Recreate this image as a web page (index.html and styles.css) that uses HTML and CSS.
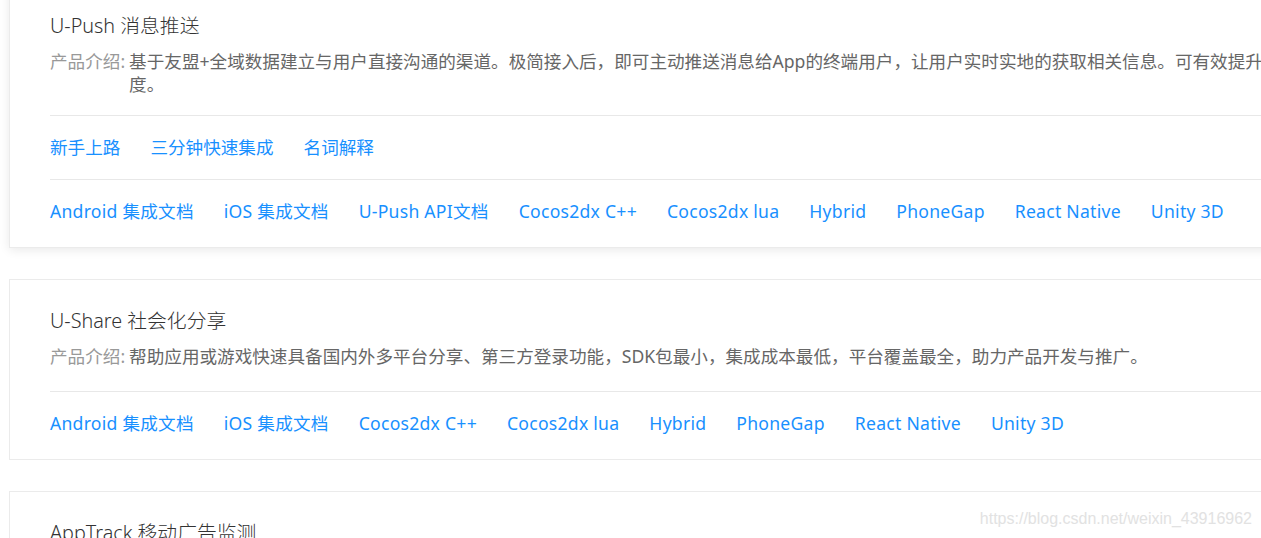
FILE: index.html
```html
<!DOCTYPE html>
<html lang="zh-CN">
<head>
<meta charset="utf-8">
<title>友盟 文档</title>
<link rel="stylesheet" href="styles.css">
</head>
<body>
<main class="page">
  <section class="card card--active">
    <div class="card__head">
      <h2 class="card__title">U-Push 消息推送</h2>
      <div class="card__desc card__desc--wrap">
        <span class="card__label">产品介绍:</span>
        <p class="card__text">基于友盟+全域数据建立与用户直接沟通的渠道。极简接入后，即可主动推送消息给App的终端用户，让用户实时实地的获取相关信息。可有效提升用户粘性，提高App活跃度。</p>
      </div>
    </div>
    <nav class="card__links card__links--guide">
      <a class="card__link" href="#">新手上路</a>
      <a class="card__link" href="#">三分钟快速集成</a>
      <a class="card__link" href="#">名词解释</a>
    </nav>
    <nav class="card__links">
      <a class="card__link" href="#">Android 集成文档</a>
      <a class="card__link" href="#">iOS 集成文档</a>
      <a class="card__link" href="#">U-Push API文档</a>
      <a class="card__link" href="#">Cocos2dx C++</a>
      <a class="card__link" href="#">Cocos2dx lua</a>
      <a class="card__link" href="#">Hybrid</a>
      <a class="card__link" href="#">PhoneGap</a>
      <a class="card__link" href="#">React Native</a>
      <a class="card__link" href="#">Unity 3D</a>
    </nav>
  </section>

  <section class="card">
    <div class="card__head">
      <h2 class="card__title">U-Share 社会化分享</h2>
      <div class="card__desc">
        <span class="card__label">产品介绍:</span>
        <p class="card__text">帮助应用或游戏快速具备国内外多平台分享、第三方登录功能，SDK包最小，集成成本最低，平台覆盖最全，助力产品开发与推广。</p>
      </div>
    </div>
    <nav class="card__links">
      <a class="card__link" href="#">Android 集成文档</a>
      <a class="card__link" href="#">iOS 集成文档</a>
      <a class="card__link" href="#">Cocos2dx C++</a>
      <a class="card__link" href="#">Cocos2dx lua</a>
      <a class="card__link" href="#">Hybrid</a>
      <a class="card__link" href="#">PhoneGap</a>
      <a class="card__link" href="#">React Native</a>
      <a class="card__link" href="#">Unity 3D</a>
    </nav>
  </section>

  <section class="card">
    <div class="card__head">
      <h2 class="card__title">AppTrack 移动广告监测</h2>
      <div class="card__desc">
        <span class="card__label">产品介绍:</span>
        <p class="card__text">精准监测移动广告投放效果，帮助广告主评估渠道质量，优化投放策略。</p>
      </div>
    </div>
    <nav class="card__links">
      <a class="card__link" href="#">Android 集成文档</a>
      <a class="card__link" href="#">iOS 集成文档</a>
    </nav>
  </section>
</main>
<div class="watermark">https://blog.csdn.net/weixin_43916962</div>
</body>
</html>
```

FILE: styles.css
```css
html, body {
  margin: 0;
  padding: 0;
  background: #ffffff;
  overflow: hidden;
  height: 538px;
}

body {
  font-family: "Noto Sans", "Noto Sans CJK SC", sans-serif;
  position: relative;
}

.page {
  display: flex;
  flex-direction: column;
  gap: 31px;
  margin-top: -16px;
  padding-left: 9px;
}

.card {
  width: 1494px;
  box-sizing: border-box;
  border: 1px solid #ebebeb;
  background: #fff;
  padding: 0 40px 4px;
  flex-shrink: 0;
}

.card--active {
  box-shadow: 0 2px 10px rgba(0, 0, 0, 0.09);
}

.card__head {
  padding-top: 28px;
}

.card__title {
  margin: 0;
  font-size: 19.8px;
  line-height: 25px;
  font-weight: 300;
  color: #333;
}

.card__desc {
  display: flex;
  margin-top: 12px;
  margin-bottom: 23px;
  font-size: 17.6px;
  line-height: 23px;
}

.card__desc--wrap {
  margin-bottom: 19px;
}

.card__label {
  flex-shrink: 0;
  color: #999;
  margin-right: 4px;
}

.card__text {
  margin: 0;
  color: #666;
}

.card__links {
  display: flex;
  gap: 30px;
  border-top: 1px solid #e8e8e8;
  padding: 18px 0;
  font-size: 17.6px;
  line-height: 27px;
  letter-spacing: 0.25px;
}

.card__links--guide {
  letter-spacing: 0;
}

.card__link {
  color: #1890ff;
  text-decoration: none;
  white-space: nowrap;
}

.watermark {
  position: absolute;
  right: 9px;
  top: 508px;
  font-family: "Liberation Sans", Arial, sans-serif;
  font-size: 16px;
  line-height: 22px;
  color: #e2e2e2;
}
```
